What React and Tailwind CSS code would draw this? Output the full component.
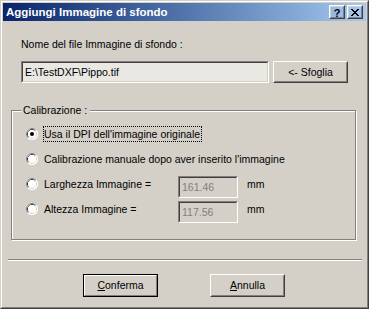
import React from "react";

function Radio({ checked }) {
  return (
    <svg width="12" height="12" viewBox="0 0 12 12" className="shrink-0">
      <circle cx="6" cy="6" r="6" fill="#ffffff" />
      <path d="M2.11 9.89 A5.5 5.5 0 0 1 9.89 2.11" fill="none" stroke="#808080" strokeWidth="1" />
      <path d="M9.89 2.11 A5.5 5.5 0 0 1 2.11 9.89" fill="none" stroke="#ffffff" strokeWidth="1" />
      <path d="M2.82 9.18 A4.5 4.5 0 0 1 9.18 2.82" fill="none" stroke="#404040" strokeWidth="1" />
      <path d="M9.18 2.82 A4.5 4.5 0 0 1 2.82 9.18" fill="none" stroke="#d4d0c8" strokeWidth="1" />
      <circle cx="6" cy="6" r="4" fill="#ffffff" />
      {checked && <circle cx="6" cy="6" r="2" fill="#000000" />}
    </svg>
  );
}

function Sunken({ className, children, bg }) {
  return (
    <div className={`border border-t-[#808080] border-l-[#808080] border-r-white border-b-white ${className}`}>
      <div className={`h-full border border-t-[#404040] border-l-[#404040] border-r-[#d4d0c8] border-b-[#d4d0c8] flex items-center ${bg}`}>
        {children}
      </div>
    </div>
  );
}

function Button({ className, children, isDefault }) {
  if (isDefault) {
    return (
      <div className={`border border-black ${className}`}>
        <div className="h-full border border-t-white border-l-white border-r-[#808080] border-b-[#808080] flex items-center justify-center">
          {children}
        </div>
      </div>
    );
  }
  return (
    <div className={`border border-t-white border-l-white border-r-[#404040] border-b-[#404040] ${className}`}>
      <div className="h-full border border-t-[#d4d0c8] border-l-[#d4d0c8] border-r-[#808080] border-b-[#808080] flex items-center justify-center">
        {children}
      </div>
    </div>
  );
}

export default function App() {
  return (
    <div className="w-[369px] h-[309px] bg-[#d4d0c8] border border-t-[#d4d0c8] border-l-[#d4d0c8] border-r-[#404040] border-b-[#404040] font-['Liberation_Sans',Arial,sans-serif] text-[10.5px] leading-[13px] text-black">
      <div className="h-full border border-t-white border-l-white border-r-[#808080] border-b-[#808080] p-px flex flex-col">
        {/* Title bar */}
        <div className="h-[18px] shrink-0 flex items-center justify-between bg-gradient-to-r from-[#0a246a] to-[#a6caf0] pl-[3px] pr-[3px]">
          <span className="text-white font-bold text-[11.5px] leading-[14px]">Aggiungi Immagine di sfondo</span>
          <div className="flex gap-[2px]">
            <Button className="w-[16px] h-[14px]">
              <span className="font-bold text-[11px] leading-[10px] mt-[1px]">?</span>
            </Button>
            <Button className="w-[16px] h-[14px]">
              <svg width="8" height="7" viewBox="0 0 8 7" shapeRendering="crispEdges">
                <path d="M0 0h2v1h-2zM6 0h2v1h-2zM1 1h2v1h-2zM5 1h2v1h-2zM2 2h4v1h-4zM3 3h2v1h-2zM2 4h4v1h-4zM1 5h2v1h-2zM5 5h2v1h-2zM0 6h2v1h-2zM6 6h2v1h-2z" fill="#000" />
              </svg>
            </Button>
          </div>
        </div>

        {/* Content */}
        <div className="flex flex-col">
          <div className="mt-[17px] ml-[18px] h-[13px]">Nome del file Immagine di sfondo :</div>
          <div className="mt-[10px] ml-[18px] flex gap-[4px]">
            <Sunken className="w-[248px] h-[22px]" bg="bg-[#e9e8e3]">
              <span className="pl-[2px]">E:\TestDXF\Pippo.tif</span>
            </Sunken>
            <Button className="w-[75px] h-[22px]">
              <span>{"<- Sfoglia"}</span>
            </Button>
          </div>

          {/* Group box */}
          <div className="relative mt-[27px] ml-[8px] w-[345px] h-[130px] border border-[#808080] shadow-[inset_1px_1px_0_#ffffff,1px_1px_0_#ffffff] pl-[14px] pt-[16px] flex flex-col gap-[11px]">
            <span className="absolute left-[9px] -top-[7px] bg-[#d4d0c8] pl-[2px] pr-[3px] h-[13px]">Calibrazione :</span>

            <div className="flex items-center h-[14px]">
              <Radio checked />
              <span className="ml-[5px] h-[16px] border border-dotted border-black flex items-center pr-px">
                Usa il DPI dell'immagine originale
              </span>
            </div>
            <div className="flex items-center h-[14px]">
              <Radio />
              <span className="ml-[6px]">Calibrazione manuale dopo aver inserito l'immagine</span>
            </div>
            <div className="flex items-center h-[14px]">
              <Radio />
              <span className="ml-[6px] w-[134px]">Larghezza Immagine =</span>
              <div className="self-start -mt-[1px] h-[22px]">
                <Sunken className="w-[60px] h-[22px]" bg="bg-[#d4d0c8]">
                  <span className="pl-[2px] text-[#808080]">161.46</span>
                </Sunken>
              </div>
              <span className="ml-[9px]">mm</span>
            </div>
            <div className="flex items-center h-[14px]">
              <Radio />
              <span className="ml-[6px] w-[134px]">Altezza Immagine =</span>
              <div className="self-start -mt-[1px] h-[22px]">
                <Sunken className="w-[60px] h-[22px]" bg="bg-[#d4d0c8]">
                  <span className="pl-[2px] text-[#808080]">117.56</span>
                </Sunken>
              </div>
              <span className="ml-[9px]">mm</span>
            </div>
          </div>

          {/* Separator */}
          <div className="mt-[19px] ml-[5px] w-[354px] h-[2px] border-t border-t-[#808080] border-b border-b-white" />

          {/* Buttons */}
          <div className="mt-[13px] ml-[80px] flex gap-[52px]">
            <Button isDefault className="w-[75px] h-[23px]">
              <span><u>C</u>onferma</span>
            </Button>
            <Button className="w-[75px] h-[23px]">
              <span><u>A</u>nnulla</span>
            </Button>
          </div>
        </div>
      </div>
    </div>
  );
}
